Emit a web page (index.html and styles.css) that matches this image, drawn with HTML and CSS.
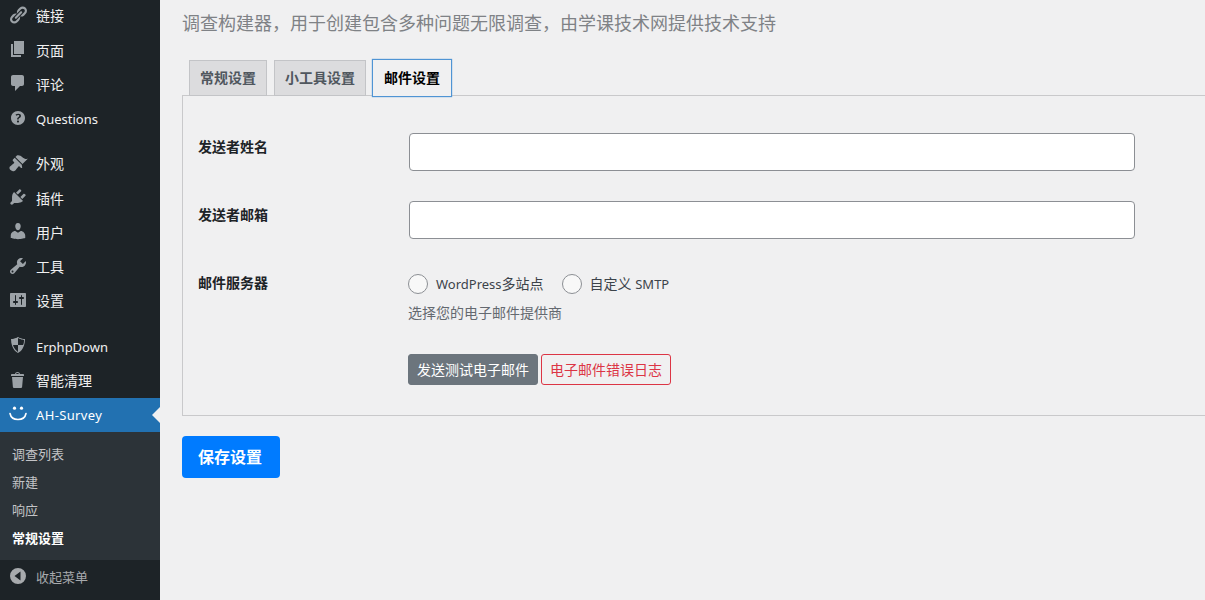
FILE: index.html
```html
<!DOCTYPE html>
<html lang="zh-CN">
<head>
<meta charset="utf-8">
<title>AH-Survey 常规设置</title>
<link rel="stylesheet" href="styles.css">
</head>
<body>
<div class="app">
  <aside class="sidebar">
    <nav class="menu">
      <a class="item"><svg class="ico" viewBox="0 0 20 20"><path d="M17.74 2.76c1.68 1.69 1.68 4.41 0 6.1l-1.53 1.52c-1.12 1.12-2.7 1.47-4.14 1.09l2.62-2.61.76-.77.76-.76c.84-.84.84-2.2 0-3.04-.84-.85-2.2-.85-3.04 0l-.77.76-3.38 3.38c-.37-1.44-.02-3.02 1.1-4.14l1.52-1.53c1.69-1.68 4.42-1.68 6.1 0zM8.59 13.43l5.34-5.34c.42-.42.42-1.1 0-1.52-.44-.43-1.13-.39-1.53 0l-5.33 5.34c-.42.42-.42 1.1 0 1.52.44.43 1.13.39 1.52 0zm-.76 2.29l4.14-4.15c.38 1.44.03 3.02-1.09 4.14l-1.52 1.53c-1.69 1.68-4.41 1.68-6.1 0-1.68-1.68-1.68-4.42 0-6.1l1.53-1.52c1.12-1.12 2.7-1.47 4.14-1.1l-4.14 4.15c-.85.84-.85 2.2 0 3.05.84.84 2.2.84 3.04 0z"/></svg><span>链接</span></a>
      <a class="item"><svg class="ico" viewBox="0 0 20 20"><path d="M6 15V2h10v13H6zm-1 1h8v2H3V5h2v11z"/></svg><span>页面</span></a>
      <a class="item"><svg class="ico" viewBox="0 0 20 20"><path d="M5 2h9c1.1 0 2 .9 2 2v7c0 1.1-.9 2-2 2h-2l-5 5v-5H5c-1.1 0-2-.9-2-2V4c0-1.1.9-2 2-2z"/></svg><span>评论</span></a>
      <a class="item"><svg class="ico" viewBox="0 0 20 20"><path d="M17 10c0-3.87-3.14-7-7-7-3.87 0-7 3.13-7 7s3.13 7 7 7c3.86 0 7-3.13 7-7zm-6.3 1.48H9.14v-.43c0-.38.08-.7.24-.98s.46-.57.88-.88c.41-.29.68-.53.81-.71.14-.18.2-.39.2-.62 0-.25-.09-.44-.28-.58-.19-.13-.45-.19-.79-.19-.58 0-1.25.19-2 .57l-.64-1.28c.87-.49 1.8-.74 2.77-.74.81 0 1.45.2 1.92.58.48.39.71.91.71 1.55 0 .43-.09.8-.29 1.11-.19.32-.57.67-1.11 1.06-.38.28-.61.49-.71.63-.1.15-.15.34-.15.57v.35zm-1.47 2.74c-.18-.17-.27-.42-.27-.73 0-.33.08-.58.26-.75s.43-.25.77-.25c.32 0 .57.09.75.26s.27.42.27.74c0 .3-.09.55-.27.72-.18.18-.43.27-.75.27-.33 0-.58-.09-.76-.26z"/></svg><span class="latin">Questions</span></a>
      <div class="sep"></div>
      <a class="item"><svg class="ico" viewBox="0 0 20 20"><path d="M14.48 11.06L7.41 3.99l1.5-1.5c.5-.56 2.3-.47 3.51.32 1.21.8 1.43 1.28 2.91 2.1 1.18.64 2.45 1.26 4.45.85zm-.71.71L6.7 4.7 4.93 6.47c-.39.39-.39 1.02 0 1.41l1.06 1.06c.39.39.39 1.03 0 1.42-.6.6-1.43 1.11-2.21 1.69-.35.26-.7.53-1.01.84C1.43 13.23.78 15.35 2.55 17.12s3.89 1.12 5.25-.24c.31-.31.58-.66.84-1.01.58-.78 1.09-1.61 1.69-2.21.39-.39 1.02-.39 1.41 0l1.06 1.06c.39.39 1.02.39 1.41 0z"/></svg><span>外观</span></a>
      <a class="item"><svg class="ico" viewBox="0 0 20 20"><path d="M13.11 4.36L9.87 7.6 8 5.73l3.24-3.24c.35-.34 1.05-.2 1.56.32.52.51.66 1.21.31 1.55zm-8 1.77l.91-1.12 9.01 9.01-1.19.84c-.71.71-2.63 1.16-3.82 1.16H6.14L4.9 17.26c-.59.59-1.54.59-2.12 0-.59-.58-.59-1.53 0-2.12l1.24-1.24v-3.88c0-1.13.4-3.19 1.09-3.89zm7.26 3.97l3.24-3.24c.34-.35 1.04-.21 1.55.31.52.51.66 1.21.31 1.55l-3.24 3.25z"/></svg><span>插件</span></a>
      <a class="item"><svg class="ico" viewBox="0 0 20 20"><path d="M10 9.25c-2.27 0-2.73-3.44-2.73-3.44C7 4.02 7.82 2 9.97 2c2.16 0 2.98 2.02 2.71 3.81 0 0-.41 3.44-2.68 3.44zm0 2.57L12.72 10c2.39 0 4.52 2.33 4.52 4.53v2.49s-3.65 1.13-7.24 1.13c-3.65 0-7.24-1.13-7.24-1.13v-2.49c0-2.25 1.94-4.48 4.47-4.48z"/></svg><span>用户</span></a>
      <a class="item"><svg class="ico" viewBox="0 0 20 20"><path d="M16.68 9.77c-1.34 1.34-3.3 1.67-4.95.99l-5.41 6.52c-.99.99-2.59.99-3.58 0s-.99-2.59 0-3.57l6.52-5.42c-.68-1.65-.35-3.61.99-4.95 1.28-1.28 3.12-1.62 4.72-1.06l-2.89 2.89 2.82 2.82 2.86-2.87c.53 1.58.18 3.39-1.08 4.65zM3.81 16.21c.4.39 1.04.39 1.43 0 .4-.4.4-1.04 0-1.43-.39-.4-1.03-.4-1.43 0-.39.39-.39 1.03 0 1.43z"/></svg><span>工具</span></a>
      <a class="item"><svg class="ico" viewBox="0 0 20 20"><path d="M18 16V4c0-.55-.45-1-1-1H3c-.55 0-1 .45-1 1v12c0 .55.45 1 1 1h14c.55 0 1-.45 1-1zM8 11h1c.55 0 1 .45 1 1s-.45 1-1 1H8v1.5c0 .28-.22.5-.5.5s-.5-.22-.5-.5V13H6c-.55 0-1-.45-1-1s.45-1 1-1h1V5.5c0-.28.22-.5.5-.5s.5.22.5.5V11zm5-2h-1c-.55 0-1-.45-1-1s.45-1 1-1h1V5.5c0-.28.22-.5.5-.5s.5.22.5.5V7h1c.55 0 1 .45 1 1s-.45 1-1 1h-1v5.5c0 .28-.22.5-.5.5s-.5-.22-.5-.5V9z"/></svg><span>设置</span></a>
      <div class="sep"></div>
      <a class="item"><svg class="ico" viewBox="0 0 20 20"><path d="M10 2s3 2 7 2c0 11-7 14-7 14S3 15 3 4c4 0 7-2 7-2zm0 8h5s1-1 1-5c0 0-5-1-6-2v7H5c1 4 5 7 5 7v-7z"/></svg><span class="latin">ErphpDown</span></a>
      <a class="item"><svg class="ico" viewBox="0 0 20 20"><path d="M12 4h3c.6 0 1 .4 1 1v1H3V5c0-.6.5-1 1-1h3c.2-1.1 1.3-2 2.5-2s2.3.9 2.5 2zM8 4h3c-.2-.6-.9-1-1.5-1S8.2 3.4 8 4zM4 7h11l-.9 10.1c0 .5-.5.9-1 .9H5.9c-.5 0-.9-.4-1-.9L4 7z"/></svg><span>智能清理</span></a>
      <a class="item item-active"><svg class="ico ico-smile" viewBox="0 0 20 20"><circle cx="6.5" cy="4.2" r="1.6"/><circle cx="13.5" cy="4.2" r="1.6"/><path class="smile-arc" d="M2 9.5c.8 4 3.8 6 8 6s7.2-2 8-6"/></svg><span class="latin latin-wide">AH-Survey</span></a>
      <div class="submenu">
        <a class="sub">调查列表</a>
        <a class="sub">新建</a>
        <a class="sub">响应</a>
        <a class="sub sub-current">常规设置</a>
      </div>
      <a class="collapse"><svg class="ico" viewBox="0 0 20 20"><path fill-rule="evenodd" d="M10 2a8 8 0 1 1 0 16 8 8 0 0 1 0-16zM12.5 5.5 6.5 10l6 4.5z"/></svg><span>收起菜单</span></a>
    </nav>
  </aside>
  <main class="main">
    <p class="title">调查构建器，用于创建包含多种问题无限调查，由学课技术网提供技术支持</p>
    <div class="tabs">
      <a class="tab">常规设置</a>
      <a class="tab">小工具设置</a>
      <a class="tab tab-active">邮件设置</a>
    </div>
    <section class="panel">
      <div class="field">
        <label class="field-label">发送者姓名</label>
        <div class="control"><input class="text-input" type="text"></div>
      </div>
      <div class="field">
        <label class="field-label">发送者邮箱</label>
        <div class="control"><input class="text-input" type="text"></div>
      </div>
      <div class="field field-last">
        <label class="field-label">邮件服务器</label>
        <div class="control control-server">
          <div class="radios">
            <label class="radio"><span class="radio-dot"></span><span><span class="latin">WordPress</span>多站点</span></label>
            <label class="radio"><span class="radio-dot"></span><span>自定义 <span class="latin">SMTP</span></span></label>
          </div>
          <p class="hint">选择您的电子邮件提供商</p>
          <div class="actions">
            <button class="btn btn-grey" type="button">发送测试电子邮件</button>
            <button class="btn btn-red" type="button">电子邮件错误日志</button>
          </div>
        </div>
      </div>
    </section>
    <button class="save" type="button">保存设置</button>
  </main>
</div>
</body>
</html>
```

FILE: styles.css
```css
* { box-sizing: border-box; }
html, body { margin: 0; height: 100%; overflow: hidden; }
body {
  background: #f0f0f1;
  font-family: "Noto Sans", "Noto Sans CJK SC", sans-serif;
  font-size: 14px;
  color: #3c434a;
}
.app { display: flex; height: 600px; overflow: hidden; }
.latin { font-size: 13px; }
.latin-wide { letter-spacing: .35px; }

.sidebar { width: 160px; flex: none; background: #1d2327; overflow: hidden; }
.menu { display: flex; flex-direction: column; margin-top: -0.8px; }
.item {
  position: relative;
  display: flex;
  align-items: center;
  gap: 8px;
  height: 34.25px;
  padding-left: 8px;
  color: #f0f0f1;
  font-size: 14px;
  line-height: 18px;
}
.ico { width: 20px; height: 20px; flex: none; fill: #9ca2a7; }
.item .ico { margin-top: -3px; }
.sep { height: 11.1px; flex: none; }
.item-active { background: #2271b1; color: #fff; }
.item-active::after {
  content: "";
  position: absolute;
  right: 0;
  top: 50%;
  margin-top: -8px;
  border: 8px solid transparent;
  border-right-color: #f0f0f1;
  border-left-width: 0;
}
.ico-smile { fill: #fff; }
.smile-arc { fill: none; stroke: #fff; stroke-width: 1.6; stroke-linecap: round; }

.submenu {
  display: flex;
  flex-direction: column;
  height: 128px;
  padding-top: 7.2px;
  background: #2c3338;
}
.sub {
  height: 28px;
  padding-left: 12px;
  font-size: 13px;
  line-height: 28px;
  color: #c3c4c7;
}
.sub-current { color: #fff; font-weight: 700; }
.collapse {
  display: flex;
  align-items: center;
  gap: 8px;
  height: 32px;
  padding-left: 8px;
  font-size: 13px;
  color: #a7aaad;
}
.collapse .ico { fill: #a7aaad; }

.main { flex: 1; min-width: 0; padding: 11px 0 0 22px; overflow: hidden; }
.title {
  margin: 0;
  font-size: 18px;
  line-height: 24px;
  color: #7f8286;
}
.tabs {
  position: relative;
  z-index: 1;
  display: flex;
  align-items: center;
  gap: 7px;
  height: 36px;
  margin: 25px 0 -1px 7px;
}
.tab {
  display: block;
  height: 36px;
  padding: 0 10px;
  border: 1px solid #c3c4c7;
  background: #dcdcde;
  font-size: 14px;
  font-weight: 700;
  line-height: 34px;
  color: #50575e;
}
.tab-active {
  height: 38px;
  margin-left: -1px;
  padding: 0 11px;
  border-color: #4f94d4;
  box-shadow: 0 0 1px 0 #4f94d4;
  background: #f0f0f1;
  line-height: 36px;
  color: #000;
}
.panel {
  width: 1040px;
  padding: 37px 0 30px 15px;
  border: 1px solid #c9c9cb;
  border-right: 0;
}
.field { display: flex; margin-bottom: 30px; }
.field-last { margin-bottom: 0; }
.field-label {
  flex: none;
  width: 210px;
  padding-top: 4px;
  font-size: 14px;
  font-weight: 700;
  line-height: 20px;
  color: #1d2327;
}
.control { flex: none; width: 727px; }
.control-server { padding-top: 5px; }
.text-input {
  display: block;
  width: 726px;
  height: 38px;
  margin-left: 1px;
  border: 1px solid #8c8f94;
  border-radius: 4px;
  background: #fff;
}
.radios { display: flex; gap: 18px; height: 20px; }
.radio {
  display: flex;
  align-items: center;
  gap: 8px;
  font-size: 14px;
  line-height: 20px;
  color: #3c434a;
}
.radio-dot {
  width: 20px;
  height: 20px;
  border: 1px solid #8c8f94;
  border-radius: 50%;
  background: #f8f8f8;
}
.hint { margin: 9px 0 0; font-size: 14px; line-height: 20px; color: #646970; }
.actions { display: flex; gap: 3px; margin-top: 31px; }
.btn {
  width: 130px;
  height: 31px;
  padding: 0;
  border: 1px solid;
  border-radius: 3px;
  font-family: inherit;
  font-size: 14px;
  line-height: 29px;
}
.btn-grey { background: #6c757d; border-color: #6c757d; color: #fff; }
.btn-red { background: transparent; border-color: #dc3545; color: #dc3545; }
.save {
  display: block;
  width: 98px;
  height: 42px;
  margin-top: 20px;
  padding: 0 2px 2px 0;
  border: 0;
  border-radius: 4px;
  background: #007bff;
  color: #fff;
  font-family: inherit;
  font-size: 16px;
  font-weight: 700;
}
```
